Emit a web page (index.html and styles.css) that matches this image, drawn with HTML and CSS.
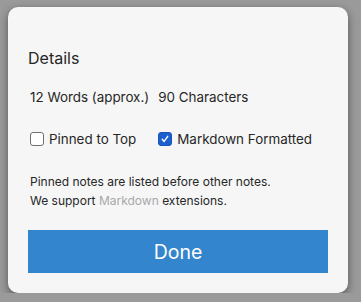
FILE: index.html
```html
<!DOCTYPE html>
<html lang="en">
<head>
  <meta charset="UTF-8" />
  <title>Details</title>
  <link rel="stylesheet" href="styles.css">
</head>
<body>

<div class="panel">
  <h2 class="titulo">Details</h2>

  <div class="stats">
    <span>12 Words (approx.)</span>
    <span>90 Characters</span>
  </div>

  <div class="opciones">
    <label class="opcion">
      <span class="caja"></span>
      Pinned to Top
    </label>
    <label class="opcion">
      <span class="caja marcada">
        <svg width="14" height="14" viewBox="0 0 14 14"><path d="M3.8 7.4 L6 9.8 L10.2 3.9" fill="none" stroke="#fff" stroke-width="1.7" stroke-linecap="round" stroke-linejoin="round"/></svg>
      </span>
      Markdown Formatted
    </label>
  </div>

  <p class="nota">
    Pinned notes are listed before other notes.<br>
    We support <a href="#" class="enlace">Markdown</a> extensions.
  </p>

  <button type="button" class="boton">Done</button>
</div>

</body>
</html>
```

FILE: styles.css
```css
body {
  margin: 0;
  background: #9a9a9a;
  font-family: Inter, "Noto Sans", sans-serif;
  color: #262626;
}
.panel {
  width: 340px;
  height: 286px;
  box-sizing: border-box;
  margin: 7px 0 0 8px;
  padding: 41px 20px 20px;
  background: #f6f6f6;
  border-radius: 10px;
  box-shadow: 0 3px 8px rgba(0, 0, 0, 0.45);
  display: flex;
  flex-direction: column;
}
.titulo {
  margin: 0;
  font-size: 16px;
  font-weight: normal;
  line-height: 20px;
}
.stats {
  margin-top: 20px;
  padding-left: 2px;
  display: flex;
  gap: 9px;
  font-size: 13.4px;
  line-height: 18px;
}
.opciones {
  margin-top: 24px;
  padding-left: 2px;
  display: flex;
  gap: 22px;
  font-size: 13.4px;
  line-height: 18px;
}
.opcion {
  display: flex;
  align-items: center;
  gap: 5px;
}
.caja {
  width: 12px;
  height: 12px;
  border: 1px solid #6f6f6f;
  border-radius: 3px;
  background: #fff;
  display: flex;
  align-items: center;
  justify-content: center;
}
.caja.marcada {
  background: #1d5fcf;
  border-color: #1a55b8;
}
.nota {
  margin: 24px 0 0;
  padding-left: 2px;
  font-size: 12px;
  line-height: 19px;
}
.enlace {
  color: #a8a8a8;
  text-decoration: none;
}
.boton {
  margin-top: 20px;
  height: 43px;
  width: 300px;
  border: none;
  background: #3385cd;
  color: #fff;
  font-family: Inter, "Noto Sans", sans-serif;
  font-size: 19.5px;
  cursor: pointer;
}
```
